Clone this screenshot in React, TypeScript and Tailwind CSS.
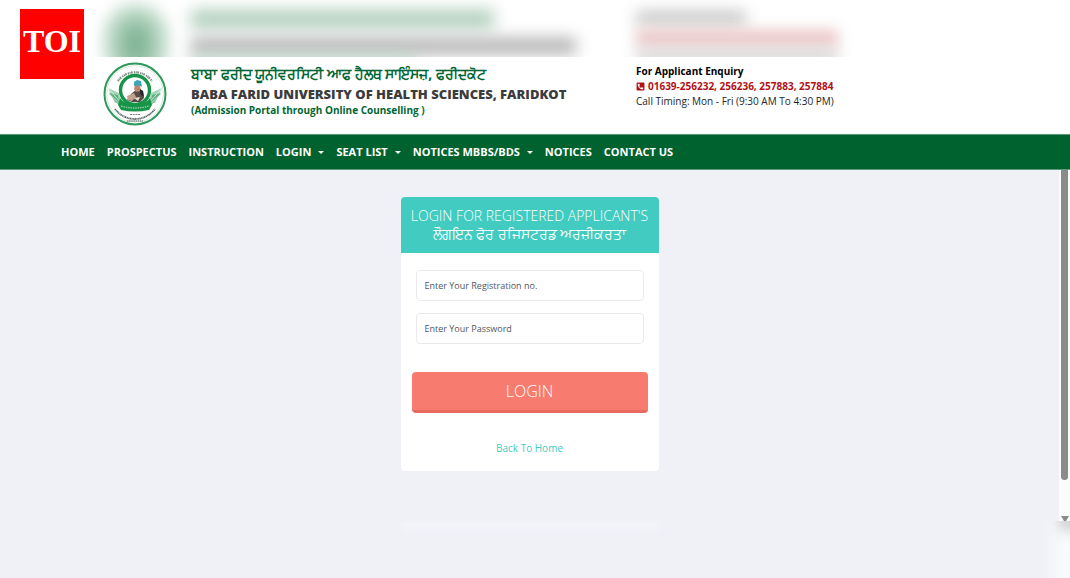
import { useState } from "react";
import { FaPhoneSquareAlt } from "react-icons/fa";

type NavItem = {
  label: string;
  hasMenu?: boolean;
};

const navItems: NavItem[] = [
  { label: "HOME" },
  { label: "PROSPECTUS" },
  { label: "INSTRUCTION" },
  { label: "LOGIN", hasMenu: true },
  { label: "SEAT LIST", hasMenu: true },
  { label: "NOTICES MBBS/BDS", hasMenu: true },
  { label: "NOTICES" },
  { label: "CONTACT US" },
];

function Seal() {
  return (
    <svg viewBox="0 0 64 64" className="size-16 shrink-0" role="img" aria-label="University seal">
      <circle cx="32" cy="32" r="30.5" fill="#fff" stroke="#2f985d" strokeWidth="2" />
      <circle cx="32" cy="32" r="28.3" fill="none" stroke="#b9dcc8" strokeWidth="0.6" />
      {/* lettering around the rim */}
      <path d="M15 19 A21 21 0 0 1 49 19" fill="none" stroke="#7d8881" strokeWidth="2.2" strokeDasharray="1.3 0.6 1 0.5 1.6 1.2" />
      <path d="M12 47 A25 25 0 0 0 52 47" fill="none" stroke="#56635b" strokeWidth="1.8" strokeDasharray="1.2 0.5 0.8 0.4 1.5 0.5" />
      <path d="M24 59 H40" stroke="#7d8881" strokeWidth="1.4" strokeDasharray="1.5 0.6" />
      <path d="M27 52.5 H37" stroke="#7d8881" strokeWidth="1.2" strokeDasharray="2 0.7" />
      {/* leaves */}
      <path d="M5 26 L16 31 L18 40 L12 41 Z M59 26 L48 31 L46 40 L52 41 Z" fill="#a5d5b8" />
      <path d="M6 31 L15 33 L17 44 L12 39 Z M58 31 L49 33 L47 44 L52 39 Z" fill="#5fb181" />
      <path d="M5 26 L18 41 M6 32 L19 44 M59 26 L46 41 M58 32 L45 44" stroke="#e0f1e7" strokeWidth="0.8" />
      <circle cx="32" cy="28" r="14.5" fill="#fff" stroke="#169447" strokeWidth="3.4" />
      {/* portrait */}
      <path d="M24 38 L28 32 L34 27 L40 29 L41 36 L37 40 L29 40 Z" fill="#584b4a" />
      <path d="M24 34 L31 31 L33 35 L29 39 L25 38 Z" fill="#c5a28c" />
      <path d="M32 23 L37 23 L38 29 L33 30 L31 27 Z" fill="#b98770" />
      <path d="M31 24 L31 20 L34 18 L38 19 L39 25 L36 23 Z" fill="#39a5b8" />
      <path d="M37 27 L40 29 L41 35 L37 32 Z" fill="#29282c" />
      <path d="M31 36 L37 35 L35 39 Z" fill="#e9ded6" />
      {/* ribbon */}
      <path d="M17 36 Q21 42 32 43 Q43 42 47 36 L49 43 L46 48 Q32 51 18 48 L15 43 Z" fill="#169447" />
      <path d="M18 44 Q32 48 46 44" fill="none" stroke="#8ccaa3" strokeWidth="1.5" strokeDasharray="1.5 0.9" />
    </svg>
  );
}

// Soft copy of the header that fills the space above it
function BlurredBackdrop() {
  return (
    <div className="absolute inset-0 overflow-hidden" aria-hidden="true">
      <div className="absolute left-[104px] top-1 h-[76px] w-16 rounded-full bg-[#c2dccb] blur-[8px]" />
      <div className="absolute left-[120px] top-5 h-12 w-8 rounded-full bg-[#529870] opacity-60 blur-[10px]" />
      <div className="absolute left-[191px] top-[10px] h-[18px] w-[303px] bg-[#aecdba] blur-[8px]" />
      <div className="absolute left-[191px] top-[38px] h-4 w-[385px] bg-[#b0b0b0] blur-[8px]" />
      <div className="absolute left-[191px] top-[56px] h-3 w-[226px] bg-[#b4d2c0] blur-[8px]" />
      <div className="absolute left-[636px] top-[12px] h-3 w-[110px] bg-[#bcbcbc] blur-[8px]" />
      <div className="absolute left-[636px] top-[30px] h-4 w-[202px] bg-[#ebc5c5] blur-[7px]" />
      <div className="absolute left-[636px] top-[50px] h-3 w-[202px] bg-[#d0cccc] blur-[8px]" />
    </div>
  );
}

function Header() {
  return (
    <header className="flex h-[77px] items-start bg-white pl-[103px] pt-[5px]">
      <Seal />
      <div className="flex w-[469px] shrink-0 flex-col pl-6 pt-[2px]">
        <p className="text-[14px] font-bold leading-5 text-[#006633]">
          ਬਾਬਾ ਫਰੀਦ ਯੂਨੀਵਰਸਿਟੀ ਆਫ ਹੈਲਥ ਸਾਇੰਸਜ਼, ਫਰੀਦਕੋਟ
        </p>
        <h1 className="text-[13px] font-extrabold leading-5 text-[#3c3c3c]">
          BABA FARID UNIVERSITY OF HEALTH SCIENCES, FARIDKOT
        </h1>
        <p className="text-[10px] font-bold leading-3 text-[#006633]">
          (Admission Portal through Online Counselling )
        </p>
      </div>
      <div className="flex flex-col pt-[2px] text-[10px] leading-[15px]">
        <p className="font-bold text-black">For Applicant Enquiry</p>
        <p className="flex items-center gap-[3px] font-bold text-[#b01217]">
          <FaPhoneSquareAlt className="size-[9px]" />
          01639-256232, 256236, 257883, 257884
        </p>
        <p className="text-[#212529]">Call Timing: Mon - Fri (9:30 AM To 4:30 PM)</p>
      </div>
    </header>
  );
}

function NavBar() {
  return (
    <nav className="flex h-9 items-center gap-3 border-y border-[#5b9b7a] bg-[#00622e] pl-[61px] text-[11px] font-bold text-white">
      {navItems.map((item) =>
        item.hasMenu ? (
          <button key={item.label} className="flex items-center gap-[7px]">
            {item.label}
            <svg viewBox="0 0 6 3" className="h-[3px] w-[6px]">
              <path d="M0 0 H6 L3 3 Z" fill="#fff" />
            </svg>
          </button>
        ) : (
          <a key={item.label} href="#">
            {item.label}
          </a>
        )
      )}
    </nav>
  );
}

function LoginCard() {
  const [regNo, setRegNo] = useState("");
  const [password, setPassword] = useState("");

  return (
    <form
      className="flex w-[258px] flex-col overflow-hidden rounded bg-white"
      onSubmit={(e) => e.preventDefault()}
    >
      <h2 className="bg-[#42cbc1] py-[10px] text-center text-[14px] font-light leading-[18px] text-white">
        LOGIN FOR REGISTERED APPLICANT'S
        <br />
        ਲੌਗਇਨ ਫੋਰ ਰਜਿਸਟਰਡ ਅਰਜ਼ੀਕਰਤਾ
      </h2>
      <div className="flex flex-col gap-3 px-[15px] pt-[17px]">
        <input
          type="text"
          aria-label="Registration number"
          placeholder="Enter Your Registration no."
          value={regNo}
          onChange={(e) => setRegNo(e.target.value)}
          className="h-[31px] rounded border border-[#eaeaec] px-2 text-[9px] text-[#6c757d] placeholder:text-[#4f565d]"
        />
        <input
          type="password"
          aria-label="Password"
          placeholder="Enter Your Password"
          value={password}
          onChange={(e) => setPassword(e.target.value)}
          className="h-[31px] rounded border border-[#eaeaec] px-2 text-[9px] text-[#6c757d] placeholder:text-[#4f565d]"
        />
      </div>
      <button
        type="submit"
        className="mx-[11px] mt-7 h-[41px] rounded border-b-[3px] border-[#e76b60] bg-[#f77b6f] text-[16px] font-light text-white"
      >
        LOGIN
      </button>
      <a href="#" className="mb-[15px] mt-[27px] self-center text-[10px] leading-4 text-[#42cbc1]">
        Back To Home
      </a>
    </form>
  );
}

function ScrollTrack() {
  return (
    <div className="flex w-[11px] flex-col items-center justify-between bg-[#fcfcfc]" aria-hidden="true">
      <div className="h-[310px] w-[7px] rounded-b-full bg-[#8b8b8b]" />
      <svg viewBox="0 0 8 5" className="h-[5px] w-2">
        <path d="M0 0 H8 L5 5 H3 Z" fill="#8b8b8b" />
      </svg>
    </div>
  );
}

export default function App() {
  return (
    <div className="flex min-h-screen flex-col bg-[#f0f1f7] font-['Open_Sans','Noto_Sans',sans-serif]">
      <div className="relative h-[57px] bg-white">
        <BlurredBackdrop />
        <div className="absolute left-5 top-[9px] flex h-[70px] w-16 justify-center bg-[#ff0000] pt-3 font-['Liberation_Serif',serif] text-[32px] font-bold leading-10 text-white">
          TOI
        </div>
      </div>
      <Header />
      <NavBar />
      <div className="flex h-[351px]">
        <main className="flex flex-1 items-start justify-center pt-[27px]">
          <LoginCard />
        </main>
        <ScrollTrack />
      </div>
      <div className="relative min-h-[57px] flex-1 overflow-hidden" aria-hidden="true">
        <div className="flex justify-center pr-[11px]">
          <div className="h-2 w-[258px] bg-[#f5f6fa] blur-[5px]" />
        </div>
        <div className="absolute -right-2 top-0 h-20 w-6 bg-white opacity-70 blur-[8px]" />
        <div className="absolute -right-1 -top-2 h-4 w-3 bg-[#b5b5b5] blur-[7px]" />
      </div>
    </div>
  );
}
